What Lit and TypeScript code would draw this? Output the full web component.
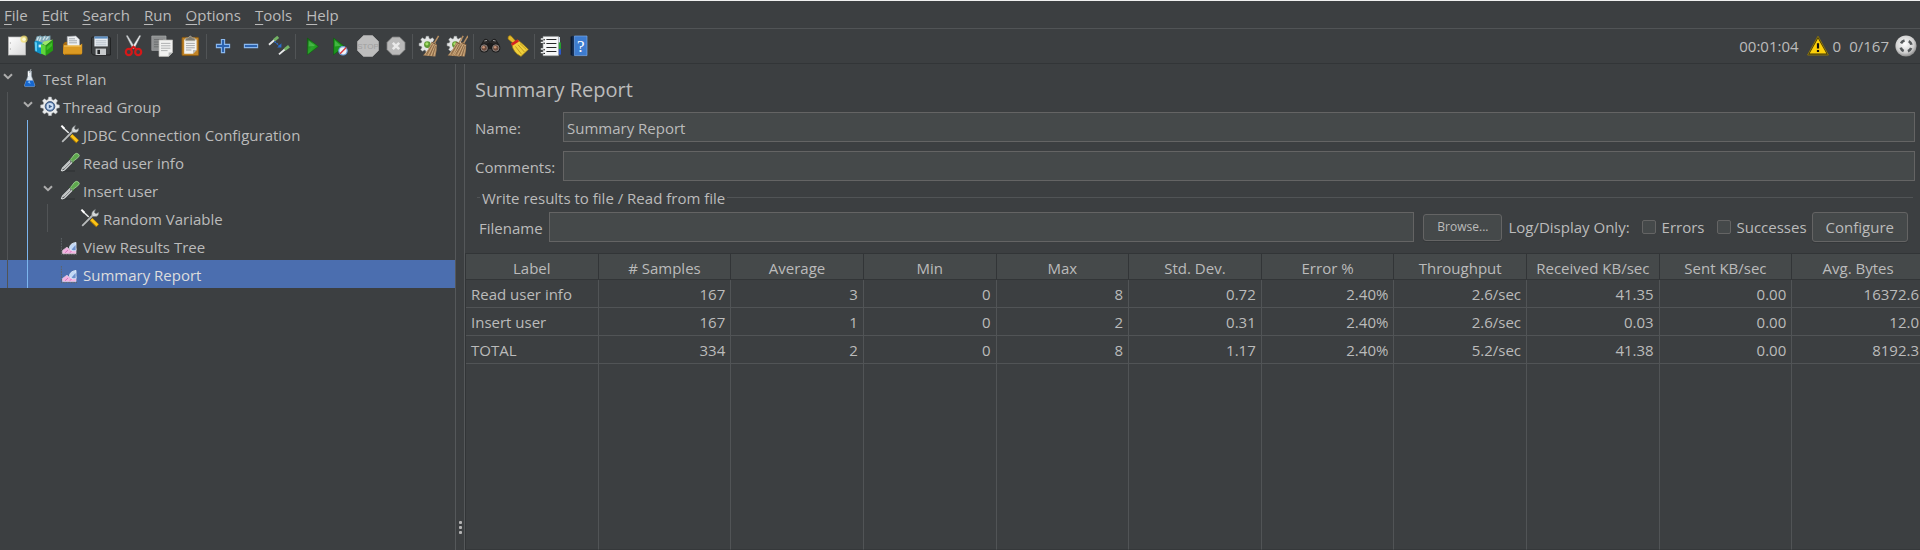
import { LitElement, html, css, svg, nothing, TemplateResult } from "lit";
import { customElement, property, state } from "lit/decorators.js";
import { classMap } from "lit/directives/class-map.js";

/* ---------- toolbar artwork, 22 x 22 ---------- */

const dropper = svg`
  <path d="M1.5 18.5 2.5 16 10.5 8l2 2-8 8-2.2 1z" fill="#4a4d4f" stroke="#d9dcdd" stroke-width="1.1"/>
  <path d="M3.5 16.8 10.5 9.8" stroke="#fff" stroke-width="1"/>
  <path d="M9.6 6.4 13.8 10.6" stroke="#2f5a2a" stroke-width="1.8"/>
  <path d="M10.6 7.4 14.2 2.6Q16.2.4 18.4 2T17.8 5.8L12.8 9.6z" fill="#5ea84e" stroke="#a5d698" stroke-width=".8"/>`;

const gearPath =
  "M8.6 1h2.8l.5 2.5 1.6.7 2.1-1.4 2 2-1.4 2.1.7 1.6 2.5.5v2.8l-2.5.5-.7 1.6 1.4 2.1-2 2-2.1-1.4-1.6.7-.5 2.5H8.6l-.5-2.5-1.6-.7-2.1 1.4-2-2 1.4-2.1-.7-1.6L.6 11.8V9l2.5-.5.7-1.6-1.4-2.1 2-2 2.1 1.4 1.6-.7z";

const smallBroom = svg`
  <path d="M20.6.8 16.2 8.4" stroke="#b58d60" stroke-width="1.5"/>
  <path d="M13.6 7 18.8 9.4 18.6 15 17.4 21.6 5 20.4 9.8 15z" fill="#a98359"/>
  <path d="M14.6 8.2 7 19.8M16 8.8 10 20.6M17.2 9.4 13 21M18 10 16 21.2" stroke="#d0b084" stroke-width=".9"/>
  <path d="M14.4 9.4 8.6 18.8M16.6 9.8 11.6 20.6M17.8 11 14.6 21" stroke="#76563a" stroke-width=".6"/>
  <path d="M13.6 7.2 19 9.8" stroke="#76563a" stroke-width="1"/>`;

const smallGear = svg`
  <g transform="translate(.6 .4) scale(.88)">
    <path d=${gearPath} fill="#e4e6e6" stroke="#a9adad" stroke-width=".6"/>
    <circle cx="10" cy="10.4" r="3.8" fill="#5f9a35"/><circle cx="9.4" cy="9.6" r="1.8" fill="#a5e06a"/>
  </g>`;

const toolArt: Record<string, TemplateResult> = {
  new: svg`
    <defs><linearGradient id="pg" x2="1" y2="1"><stop offset="0" stop-color="#fff"/><stop offset="1" stop-color="#d8d8d8"/></linearGradient></defs>
    <rect x="2.5" y="2" width="17" height="18" fill="url(#pg)" stroke="#b9b9b9" stroke-width=".7"/>
    <path d="M4.4 7.5v1M4.4 13.5v1" stroke="#999" stroke-width="1"/>
    <circle cx="18" cy="4.2" r="3.6" fill="#f1df6e" opacity=".75"/><circle cx="18" cy="4.2" r="1.7" fill="#fffbd0"/>`,
  templates: svg`
    <path d="M1 6.6 2.6 1.4 6.4.6 8 1.6 11.6.4 13 1.2 16.4.6V5L11 9 1 8z" fill="#7fa9b8"/>
    <path d="M3 5.6 4.4 2M5.4 6 7 2.2M9 5 11 1.6M12 4.6 14.4 1.6" stroke="#d3e2e8" stroke-width="1.3"/>
    <path d="M.4 6.4 3 5.8 9 8V17.6L7 19.2.8 16.2z" fill="#0f8fc6"/>
    <path d="M.8 7 3 7.6V16.6L1.2 15.6z" fill="#5ccbf2"/>
    <path d="M4.6 9.6H7V12.4H4.6z" fill="#c8ecf8"/>
    <path d="M8 8.4 10 6.4 19 4.6 11.6 10.6z" fill="#9ce86a"/>
    <path d="M7 9 11.8 10.4V20.8L7 18.4z" fill="#5ed63a"/>
    <path d="M11.8 10.4 19 4.8V15.4L11.8 20.8z" fill="#249d12"/>
    <path d="M12.6 12 18 7.6V11L12.6 15.6z" fill="#3fbd28"/>`,
  open: svg`
    <path d="M1 9.2 3 7l5-.4V19H2.4L1 17z" fill="#a86c10"/>
    <path d="M5.2 1.6 13.8 1 17.4 4.4 17.6 12H5.4z" fill="#eef0f2" stroke="#9fa5ab" stroke-width=".6"/>
    <path d="M7 3.8h6M7 5.8h8M7 7.8h8" stroke="#9ba1a8" stroke-width=".9"/>
    <path d="M1.6 10.4H17.6L20.2 8.6V18.2L18.8 20H2.6L1 18.4z" fill="#dc9a22"/>
    <path d="M2 11H19" stroke="#f4c765" stroke-width="1.1"/><path d="M2.6 19.4H19" stroke="#8f5c0a" stroke-width="1"/>`,
  save: svg`
    <path d="M2.4 2H19.4L20.4 3V20H3.4L1.6 18.2V3z" fill="#3e4143" stroke="#191a1b" stroke-width=".8"/>
    <path d="M4.4 1.6H17.8V11.4H4.4z" fill="#e9eef3"/><path d="M4.4 1.4H17.8V3.6H4.4z" fill="#5c8dc0"/>
    <path d="M5.8 5.8H16.4M5.8 7.8H16.4M5.8 9.8H16.4" stroke="#a9b4be" stroke-width=".8"/>
    <path d="M5.6 13.6H16V20H5.6z" fill="#c7cacc"/><path d="M7.4 14.8H10V19H7.4z" fill="#26282a"/>`,
  cut: svg`
    <path d="M3.2.8 4.6.6 12 12.6 10 14z" fill="#dfe2e4" stroke="#8b8f91" stroke-width=".5"/>
    <path d="M17.8.8 16.4.6 9 12.6 11 14z" fill="#f4f5f6" stroke="#8b8f91" stroke-width=".5"/>
    <ellipse cx="5.8" cy="17" rx="3" ry="3.2" fill="none" stroke="#d61818" stroke-width="2.2"/>
    <ellipse cx="15.2" cy="17" rx="3" ry="3.2" fill="none" stroke="#d61818" stroke-width="2.2"/>
    <path d="M7.4 14.6 10.5 11.8 13.6 14.6" fill="none" stroke="#d61818" stroke-width="2.2"/>`,
  copy: svg`
    <path d="M.8 1H15V15.4H.8z" fill="#8d8f90" stroke="#a7a9aa" stroke-width=".7"/>
    <path d="M3 4.6H12M3 7H12M3 9.4H8M3 11.8H8" stroke="#6a6c6d" stroke-width=".9"/>
    <path d="M8 5H21.6V17.4L17.6 21.4H8z" fill="#f1f1f0" stroke="#b7b7b5" stroke-width=".7"/>
    <path d="M10 8.4H19.4M10 10.8H19.4M10 13.2H19.4M10 15.6H16.6" stroke="#a8aaab" stroke-width=".9"/>
    <path d="M17.6 21.4V17.4H21.6z" fill="#b4b6b6"/>`,
  paste: svg`
    <rect x="3" y="2.4" width="16.6" height="18.2" rx="1" fill="#c08326" stroke="#8a5a12" stroke-width=".9"/>
    <path d="M5.2 4.6H17.6V15L14 18.8H5.2z" fill="#f2f2f0"/><path d="M14 18.8V15H17.6z" fill="#b9bab8"/>
    <path d="M7 8.4H15.8M7 10.6H15.8M7 12.8H15.8M7 15H12.4" stroke="#9fa2a4" stroke-width=".9"/>
    <path d="M6.6 5.8V3.2L9.4 2.8Q11.3-.6 13.2 2.8L16 3.2V5.8z" fill="#7d7a70" stroke="#b9b6a8" stroke-width=".7"/>`,
  plus: svg`<path d="M9.4 4.5h3.2v4.9h5v3.2h-5v5H9.4v-5h-5V9.4h5z" fill="#2c62ad" stroke="#8ab8ee" stroke-width="1.1"/>`,
  minus: svg`<path d="M4.4 9.4H17.6v3.2H4.4z" fill="#2c62ad" stroke="#8ab8ee" stroke-width="1.1"/>`,
  toggle: svg`
    <path d="M1 9.8 6.4 5" stroke="#e8eaea" stroke-width="1.9"/><path d="M6.2 5.2 10.2 1.8" stroke="#74b365" stroke-width="3"/>
    <path d="M11 19.4 17 14.2" stroke="#e8eaea" stroke-width="1.9"/><path d="M16.6 14.6 21 11.2" stroke="#74b365" stroke-width="3"/>
    <path d="M6.4 6.4 12 11.2" stroke="#2c6fd0" stroke-width="1.3" stroke-dasharray="2 .8"/>
    <path d="M13.4 8.2V12.4H9.2z" fill="#2c6fd0"/>`,
  start: svg`
    <defs><linearGradient id="go" x2="1" y2="1"><stop offset="0" stop-color="#0f6a10"/><stop offset=".5" stop-color="#2ba52b"/><stop offset="1" stop-color="#0c7c0c"/></linearGradient></defs>
    <path d="M6.4 3 17.4 11.4 6.4 19.8z" fill="url(#go)" stroke="#0d5c0e" stroke-width=".6"/><path d="M7.6 5.6 14 10.8 7.6 11.6z" fill="#5cc95c" opacity=".6"/>`,
  startNow: svg`
    <path d="M4.6 3 15.6 11.4 4.6 19.8z" fill="#1c961d" stroke="#0d5c0e" stroke-width=".6"/><path d="M5.8 5.6 12 10.8 5.8 11.6z" fill="#5cc95c" opacity=".6"/>
    <circle cx="14" cy="15.8" r="4.2" fill="#eef3fa" stroke="#6f9fd8" stroke-width="1.2"/>
    <path d="M11 18.8 17.2 12.6" stroke="#d8383a" stroke-width="1.4"/>`,
  stop: svg`
    <path d="M6.6.4H15.4L21.6 6.6V15.4L15.4 21.6H6.6L.4 15.4V6.6z" fill="#bdbdbd" stroke="#a9a9a9" stroke-width=".8"/>
    <text x="11" y="14" text-anchor="middle" font-size="8" font-family="Liberation Sans" fill="#a0a0a0">STOP</text>`,
  shutdown: svg`
    <path d="M7.4 2.2H14.6L19.8 7.4V14.6L14.6 19.8H7.4L2.2 14.6V7.4z" fill="#b9b9b9" stroke="#a5a5a5" stroke-width=".8"/>
    <path d="M7.8 7.8 14.2 14.2M14.2 7.8 7.8 14.2" stroke="#e9e9e9" stroke-width="2.6"/>`,
  clear: svg`${smallGear}${smallBroom}`,
  clearAll: svg`<g>${smallGear}</g><g transform="translate(-3.4 0)">${smallBroom}</g><g transform="translate(1.4 0)">${smallBroom}</g>`,
  search: svg`
    <path d="M2 10 5.4 4.6Q7 3.6 8.6 5L11 7.4 13.4 5Q15 3.6 16.6 4.6L20 10z" fill="#2b2a2a" stroke="#111" stroke-width=".6"/>
    <path d="M8.4 8H13.6V14H8.4z" fill="#1d1d1d"/><path d="M5.4 6 8 5.4M14 5.4 16.6 6" stroke="#9a9a9a" stroke-width="1"/>
    <circle cx="5.2" cy="13" r="4.6" fill="#1b1a1a"/><circle cx="5.2" cy="13" r="3.2" fill="#6b4a3c" stroke="#8f8f8f" stroke-width=".8"/><circle cx="4.6" cy="12.2" r="1.3" fill="#c79478"/>
    <circle cx="16.8" cy="13" r="4.6" fill="#1b1a1a"/><circle cx="16.8" cy="13" r="3.2" fill="#6b4a3c" stroke="#8f8f8f" stroke-width=".8"/><circle cx="16.2" cy="12.2" r="1.3" fill="#c79478"/>`,
  broom: svg`
    <path d="M1.2 1.6Q3-.4 4.6 1.4L9 6.4 6.4 8.6 1 4z" fill="#e3b92c" stroke="#8f6f10" stroke-width=".7"/>
    <path d="M4.6 8.6 11 5Q16.6 9.6 21.4 14.4L14 21.4Q6 18 4.6 8.6z" fill="#f0cf3a" stroke="#9a7812" stroke-width=".7"/>
    <path d="M8.4 11.4 14.6 19.4M11 9.8 17.4 17M13 8.6 19.4 14.6" stroke="#b38d18" stroke-width=".8"/>
    <path d="M4 8.4 10.6 4.2 12 6.4 5.4 10.8z" fill="#d42222"/>`,
  list: svg`
    <path d="M17 7.4H21V14H17z" fill="#25a12f"/><path d="M17 14H21V19.6H17z" fill="#2a58c9"/><path d="M17 2H20V7.4H17z" fill="#d7e4f3"/>
    <path d="M3 1.4H18.6V20.8H3z" fill="#f6f7f8" stroke="#8a8d8f" stroke-width=".6"/>
    <path d="M6.4 4.5H16.4M6.4 8.5H16.4M6.4 12.5H16.4M6.4 16.5H16.4" stroke="#26282a" stroke-width="1"/>
    <path d="M.8 4H4.6M.8 7.4H4.6M.8 14H4.6M.8 17.6H4.6" stroke="#e9ebec" stroke-width="1.4"/>
    <path d="M3.4 4.8H5M3.4 8.2H5M3.4 14.8H5M3.4 18.4H5" stroke="#111" stroke-width="1"/>`,
  help: svg`
    <path d="M2.6 1.8 5 .8V21L2.6 20z" fill="#0a1a33"/><path d="M4 1H7V21H4z" fill="#12294a"/>
    <path d="M6.4 1H19V20.6H6.4z" fill="#3d7cd0" stroke="#79a9e6" stroke-width=".7"/>
    <text x="12.8" y="17" text-anchor="middle" font-size="17" font-family="Liberation Serif" fill="#fff">?</text>`,
};

const warningArt = svg`
  <path d="M11 1.2 21.4 20H.6z" fill="#3a3206" stroke="#8a7410" stroke-width="1" stroke-linejoin="round"/>
  <path d="M11 3.6 19.4 18.6H2.6z" fill="#fccf0a"/>
  <path d="M11 8.2V13.6M11 15V17" stroke="#111" stroke-width="2.2"/>`;

const statusArt = svg`
  <defs><radialGradient id="ball" cx=".45" cy=".4" r=".6"><stop offset="0" stop-color="#fff"/><stop offset=".7" stop-color="#d0d0d0"/><stop offset="1" stop-color="#8c8c8c"/></radialGradient></defs>
  <circle cx="11" cy="11" r="10.6" fill="url(#ball)"/>
  <circle cx="11" cy="11" r="5.6" fill="none" stroke="#55595b" stroke-width="2.6" stroke-dasharray="4.4 4.4" stroke-dashoffset="-2.2"/>`;

/* ---------- tree artwork, 20 x 20 ---------- */

const tools = svg`
  <path d="M2.4 3 12 12" stroke="#eceeee" stroke-width="1.5"/><path d="M1.4 1.6 4.4 4.8" stroke="#fff" stroke-width="2"/>
  <path d="M11 11.4 17.6 17.8" stroke="#b07c04" stroke-width="4"/><path d="M11 11 17.4 17.2" stroke="#fbc416" stroke-width="2.6"/>
  <path d="M2.2 17.8 13 7" stroke="#3a3c3d" stroke-width="3.2"/><path d="M2.2 17.8 13 7" stroke="#b9bcbd" stroke-width="1.8"/>
  <path d="M12 8.2Q10.6 3.6 15.4 1.4L14.4 4.4 16 5.8 18.6 4.4Q19 8.8 14 8.6z" fill="#d5d8d9" stroke="#74787a" stroke-width=".6"/>`;

const chart = svg`
  <path d="M1.4 2V18.6H17" fill="none" stroke="#5f6466" stroke-width="1" stroke-dasharray="1.6 1"/>
  <path d="M2.6 17.6V14.4L7 11.2 9.4 13.4 13 12 16 12.4V17.6z" fill="#f3b4e2" stroke="#e9d5e6" stroke-width=".7"/>
  <path d="M5 16.8 8 14M9.6 16.8 13 13.6" stroke="#d678bd" stroke-width="1"/>
  <path d="M9.4 12.4Q9.4 7.4 16 6.4V14.4Q12.4 16.4 9.4 12.4z" fill="#c3d9f6" stroke="#e6effa" stroke-width=".8"/>
  <path d="M15.6 9V14.2Q13.4 14.6 11.6 13.4z" fill="#6c90cc"/>`;

const treeArt: Record<string, TemplateResult> = {
  flask: svg`
    <path d="M3.4 18.6H16" stroke="#2f3234" stroke-width="1.4"/>
    <path d="M8 3H11.4V8L14.8 17.2Q15 18.6 13.8 18.6H5.4Q4.2 18.6 4.6 17.2L8 8z" fill="#e2e9f0" stroke="#9aa7b4" stroke-width=".6"/>
    <path d="M6.2 12.6H13.2L14.8 17.4Q14.8 18.4 13.8 18.4H5.4Q4.4 18.4 4.6 17.4z" fill="#1667cf"/>
    <path d="M7.6 14.2 9.6 12.8 10.6 16z" fill="#7db9f8"/><path d="M11 1 9.6 5" stroke="#9ea5aa" stroke-width="1"/><path d="M8.4 3.6V8" stroke="#fff" stroke-width="1"/>`,
  gear: svg`
    <path d=${gearPath} fill="#e9ebec" stroke="#a2a7aa" stroke-width=".5"/>
    <circle cx="10" cy="10.4" r="4.8" fill="#5b7fae" stroke="#2d4468" stroke-width=".8"/><circle cx="10" cy="10.4" r="3.3" fill="#cfe0f4"/>
    <path d="M8.8 8.4 12.2 10.4 8.8 12.4z" fill="#3f5f8d"/>`,
  tools,
  dropper: svg`<path d="M2 19H15" stroke="#2f3234" stroke-width="1.2"/>${dropper}`,
  chart,
};

@customElement("jm-icon")
class JmIcon extends LitElement {
  @property() name = "";
  @property({ type: Number }) size = 22;
  static styles = css`
    :host { display: inline-flex; flex: none; }
    svg { display: block; }
  `;
  render() {
    const art =
      this.name === "warning" ? warningArt
      : this.name === "status" ? statusArt
      : this.size === 20 ? treeArt[this.name]
      : toolArt[this.name];
    return html`<svg width=${this.size} height=${this.size} viewBox="0 0 ${this.size} ${this.size}" aria-hidden="true" fill="none">${art}</svg>`;
  }
}

interface TreeNode { label: string; icon: string; depth: number; open?: boolean; }

const nodes: TreeNode[] = [
  { label: "Test Plan", icon: "flask", depth: 0, open: true },
  { label: "Thread Group", icon: "gear", depth: 1, open: true },
  { label: "JDBC Connection Configuration", icon: "tools", depth: 2 },
  { label: "Read user info", icon: "dropper", depth: 2 },
  { label: "Insert user", icon: "dropper", depth: 2, open: true },
  { label: "Random Variable", icon: "tools", depth: 3 },
  { label: "View Results Tree", icon: "chart", depth: 2 },
  { label: "Summary Report", icon: "chart", depth: 2 },
];

const menus = ["File", "Edit", "Search", "Run", "Options", "Tools", "Help"];

const toolGroups: [string, string][][] = [
  [["new", "New"], ["templates", "Templates"], ["open", "Open"], ["save", "Save"]],
  [["cut", "Cut"], ["copy", "Copy"], ["paste", "Paste"]],
  [["plus", "Expand All"], ["minus", "Collapse All"], ["toggle", "Toggle"]],
  [["start", "Start"], ["startNow", "Start no pauses"], ["stop", "Stop"], ["shutdown", "Shutdown"]],
  [["clear", "Clear"], ["clearAll", "Clear All"]],
  [["search", "Search"], ["broom", "Reset Search"]],
  [["list", "Function Helper"], ["help", "Help"]],
];

const columns = ["Label", "# Samples", "Average", "Min", "Max", "Std. Dev.", "Error %", "Throughput", "Received KB/sec", "Sent KB/sec", "Avg. Bytes"];

const rows = [
  ["Read user info", "167", "3", "0", "8", "0.72", "2.40%", "2.6/sec", "41.35", "0.00", "16372.6"],
  ["Insert user", "167", "1", "0", "2", "0.31", "2.40%", "2.6/sec", "0.03", "0.00", "12.0"],
  ["TOTAL", "334", "2", "0", "8", "1.17", "2.40%", "5.2/sec", "41.38", "0.00", "8192.3"],
];

@customElement("jm-tree")
class JmTree extends LitElement {
  @state() private selected = 7;
  static styles = css`
    :host { display: block; }
    .tree { margin: 0; padding: 0; list-style: none; }
    .node { display: flex; align-items: center; height: 28px; white-space: nowrap; cursor: default; }
    .selected { background: #4b6eaf; color: #dddddd; }
    .guide { align-self: stretch; width: 12px; margin-left: 7px; border-left: 1px solid #515456; }
    .active { border-left-color: #7cb5ee; }
    .toggle { width: 20px; height: 20px; padding: 0 0 4px 3px; border: 0; background: none; display: flex; align-items: center; }
    .blank { width: 20px; }
    .label { padding: 2px 0 0 3px; }
  `;
  render() {
    return html`<ul class="tree" role="tree" aria-label="Test plan">
      ${nodes.map((n, i) => html`
        <li class=${classMap({ node: true, selected: i === this.selected })} role="treeitem"
            aria-level=${n.depth + 1} aria-selected=${i === this.selected} @click=${() => (this.selected = i)}>
          ${Array.from({ length: n.depth }, (_, d) => html`<span class=${classMap({ guide: true, active: d === 1 })}></span>`)}
          ${n.open
            ? html`<button class="toggle" aria-label="Collapse ${n.label}"><svg width="10" height="7" viewBox="0 0 10 7" fill="none"><path d="M1 1.2 5 5.2 9 1.2" stroke="#adadad" stroke-width="2"/></svg></button>`
            : html`<span class="blank"></span>`}
          <jm-icon name=${n.icon} .size=${20}></jm-icon>
          <span class="label">${n.label}</span>
        </li>`)}
    </ul>`;
  }
}

@customElement("jm-summary")
class JmSummary extends LitElement {
  static styles = css`
    :host { display: flex; flex-direction: column; min-width: 0; overflow: hidden; }
    * { box-sizing: border-box; }
    .title { margin: 0; padding: 11px 10px 7px; font-size: 20px; line-height: 30px; font-weight: 400; }
    .form { display: grid; grid-template-columns: 88px 1fr; gap: 9px 0; align-items: center; padding: 0 5px 0 10px; }
    .form-label { padding-top: 2px; }
    input { font: inherit; color: inherit; }
    .text { height: 30px; min-width: 0; padding: 2px 3px 0; border: 1px solid #646464; border-radius: 0; background: #45494a; outline: none; }
    .text:focus { border-color: #4b6eaf; }
    .group { min-width: 0; margin: 5px 7px 11px 12px; padding: 4px 5px 0 2px; border: 0 solid #515456; border-top-width: 1px; }
    .legend { margin-left: 1px; padding: 2px 2px 0; line-height: 20px; }
    .file { display: flex; align-items: center; }
    .file-label { width: 70px; padding-top: 2px; }
    .path { flex: 1; }
    .button { height: 30px; padding: 0 13px; border: 1px solid #646464; border-radius: 3px; background: #45494a; color: inherit; font: inherit; box-shadow: 0 1px 0 #35383a; }
    .browse { height: 27px; margin: 0 6px 0 9px; font-size: 12px; }
    .check { display: flex; align-items: center; gap: 6px; margin-left: 12px; }
    .box { appearance: none; width: 14px; height: 14px; margin: 0; border: 1px solid #646464; border-radius: 2px; background: #45494a; }
    .box:checked { background: #4b6eaf; }
    .configure { margin-left: 5px; }
    .scroll { flex: 1; display: flex; overflow: hidden; }
    .table { flex: none; width: calc(100% + 5px); table-layout: fixed; border-spacing: 0; border-left: 1px solid #323537; }
    th { height: 27px; padding: 4px 0 0; font-weight: 400; line-height: 21px; background: #45494a; border: solid #323537; border-width: 1px 1px 1px 0; white-space: nowrap; }
    td { height: 28px; padding: 1px 5px 0; line-height: 26px; text-align: right; border: solid #515456; border-width: 0 1px 1px 0; white-space: nowrap; }
    td:first-child { text-align: left; }
    .rest td { height: auto; border-bottom-color: #35383a; }
  `;
  render() {
    return html`
      <h1 class="title">Summary Report</h1>
      <div class="form">
        <label class="form-label" for="name">Name:</label><input id="name" class="text" type="text" .value=${"Summary Report"}>
        <label class="form-label" for="comments">Comments:</label><input id="comments" class="text" type="text">
      </div>
      <fieldset class="group">
        <legend class="legend">Write results to file / Read from file</legend>
        <div class="file">
          <label class="file-label" for="path">Filename</label>
          <input id="path" class="text path" type="text">
          <button class="button browse">Browse...</button>
          <span>Log/Display Only:</span>
          <label class="check"><input class="box" type="checkbox">Errors</label>
          <label class="check"><input class="box" type="checkbox">Successes</label>
          <button class="button configure">Configure</button>
        </div>
      </fieldset>
      <div class="scroll">
        <table class="table">
          <thead><tr>${columns.map((c) => html`<th scope="col">${c}</th>`)}</tr></thead>
          <tbody>
            ${rows.map((r) => html`<tr>${r.map((v) => html`<td>${v}</td>`)}</tr>`)}
            <tr class="rest" aria-hidden="true">${columns.map(() => html`<td></td>`)}</tr>
          </tbody>
        </table>
      </div>`;
  }
}

@customElement("app-root")
class AppRoot extends LitElement {
  static styles = css`
    :host {
      display: flex; flex-direction: column; min-height: 100vh; box-sizing: border-box;
      border-top: 1px solid #f0f0f0; background: #3c3f41; color: #bbbbbb;
      font-family: "Open Sans", "Noto Sans", sans-serif; font-size: 15px; line-height: 20px;
    }
    * { box-sizing: border-box; }
    .menu { display: flex; height: 28px; border-bottom: 1px solid #515456; }
    .item { padding: 0 10px 0 4px; border: 0; background: none; color: inherit; font: inherit; line-height: 28px; }
    .key { text-decoration: underline; text-underline-offset: 3px; text-decoration-thickness: 1px; }
    .toolbar { display: flex; align-items: center; height: 35px; padding: 0 3px; border-bottom: 1px solid #323537; }
    .tool { display: flex; justify-content: center; align-items: center; width: 28px; height: 28px; padding: 0; border: 0; background: none; }
    .sep { width: 1px; height: 25px; margin: 0 2px; background: #515456; }
    .status { display: flex; align-items: center; margin-left: auto; }
    .warn { margin: 0 4px 0 8px; }
    .threads { margin: 0 6px 0 8px; }
    .body { flex: 1; display: grid; grid-template-columns: 455px 10px minmax(0, 1fr); }
    .splitter { display: flex; flex-direction: column; justify-content: flex-end; align-items: center; gap: 2px; padding-bottom: 16px; border: solid #55585a; border-width: 0 1px; }
    .dot { width: 3px; height: 3px; border-radius: 1px; background: #b4b4b4; }
  `;
  render() {
    return html`
      <nav class="menu" aria-label="Main menu">
        ${menus.map((m) => html`<button class="item"><span class="key">${m[0]}</span>${m.slice(1)}</button>`)}
      </nav>
      <div class="toolbar" role="toolbar">
        ${toolGroups.map((g, i) => html`
          ${i ? html`<span class="sep"></span>` : nothing}
          ${g.map(([icon, label]) => html`<button class="tool" aria-label=${label}><jm-icon name=${icon}></jm-icon></button>`)}`)}
        <div class="status">
          <span>00:01:04</span><jm-icon class="warn" name="warning"></jm-icon><span>0</span><span class="threads">0/167</span><jm-icon name="status"></jm-icon>
        </div>
      </div>
      <main class="body">
        <jm-tree></jm-tree>
        <div class="splitter" role="separator" aria-orientation="vertical"><span class="dot"></span><span class="dot"></span><span class="dot"></span></div>
        <jm-summary></jm-summary>
      </main>`;
  }
}
